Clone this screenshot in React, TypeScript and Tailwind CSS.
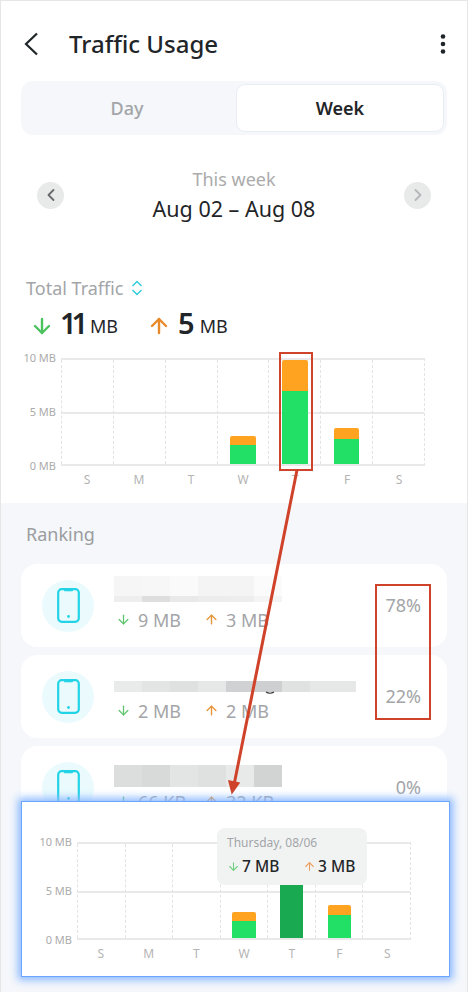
import { ArrowDown, ArrowUp, ChevronLeft, ChevronRight } from "lucide-react";

const font = { fontFamily: "'Noto Sans', Lato, sans-serif" };

const days = [
  { label: "S", down: 0, up: 0 },
  { label: "M", down: 0, up: 0 },
  { label: "T", down: 0, up: 0 },
  { label: "W", down: 1.8, up: 0.9 },
  { label: "T", down: 7, up: 3 },
  { label: "F", down: 2.4, up: 1.1 },
  { label: "S", down: 0, up: 0 },
];

function Chart({ height, pxPerMb, yWidth, active }: { height: number; pxPerMb: number; yWidth: number; active?: number }) {
  return (
    <div className="flex flex-col">
      <div className="flex">
        <div className="flex flex-col justify-between items-end pr-[5px] text-[11px] text-[#ababab]" style={{ width: yWidth, height }}>
          <div className="h-0 flex items-center">10 MB</div>
          <div className="h-0 flex items-center">5 MB</div>
          <div className="h-0 flex items-center">0 MB</div>
        </div>
        <div className="relative flex-1 flex border-y-2 border-[#e9e9e9] border-r border-r-[#e3e3e3] border-dashed border-l-0" style={{ height, borderTopStyle: "solid", borderBottomStyle: "solid" }}>
          <div className="absolute left-0 right-0 top-1/2 border-t-2 border-[#e9e9e9]" />
          {days.map((d, i) => (
            <div key={i} className="relative flex-1 flex flex-col justify-end items-center border-l border-dashed border-[#e3e3e3]">
              {d.down > 0 && (
                <>
                  <div className={`w-1/2 rounded-t-[2px] ${active === i ? "bg-[#d98a1a]" : "bg-[#ffa321]"}`} style={{ height: d.up * pxPerMb }} />
                  <div className={`w-1/2 ${active === i ? "bg-[#19a950]" : "bg-[#22e066]"}`} style={{ height: d.down * pxPerMb }} />
                </>
              )}
            </div>
          ))}
        </div>
      </div>
      <div className="flex mt-[5px] text-[12px] text-[#b4b4b4]" style={{ paddingLeft: yWidth }}>
        {days.map((d, i) => (
          <div key={i} className="flex-1 text-center">{d.label}</div>
        ))}
      </div>
    </div>
  );
}

function PhoneIcon() {
  return (
    <svg width="23" height="35" viewBox="0 0 23 35" fill="none" stroke="#22d3e6" strokeWidth="2.2">
      <rect x="1.2" y="1.2" width="20.6" height="32.6" rx="3.5" />
      <path d="M7.5 1.6h8v1.2h-8z" fill="#22d3e6" strokeWidth="1" />
      <circle cx="11.5" cy="28.5" r="1.4" fill="#22d3e6" stroke="none" />
    </svg>
  );
}

function Mosaic({ cols, h }: { cols: string[]; h: string }) {
  return (
    <div className={`flex ${h}`}>
      {cols.map((c, i) => (
        <div key={i} className="w-[28px]" style={{ background: c }} />
      ))}
    </div>
  );
}

function RankRow({ percent, down, up, children }: { percent: string; down: string; up: string; children: React.ReactNode }) {
  return (
    <div className="flex items-center h-[83px] bg-white rounded-[16px] pl-[21px] pr-[26px]">
      <div className="w-[52px] h-[52px] rounded-full bg-[#ebfbfd] flex items-center justify-center shrink-0">
        <PhoneIcon />
      </div>
      <div className="flex-1 ml-[20px] pb-[4px]">
        <div className="h-[26px] flex flex-col justify-end">{children}</div>
        <div className="flex items-center mt-[6px] text-[18px] text-[#a3a5a8] leading-6">
          <ArrowDown size={15} strokeWidth={2} className="text-[#5cc46a] ml-[2px] mr-[7px]" />
          <span className="w-[66px]">{down}</span>
          <ArrowUp size={15} strokeWidth={2.2} className="text-[#e6953a] mr-[7px]" />
          <span>{up}</span>
        </div>
      </div>
      <div className="text-[18px] text-[#a3a5a8]">{percent}</div>
    </div>
  );
}

export default function App() {
  return (
    <div className="relative w-[468px] h-[992px] overflow-hidden bg-white border-x border-t border-[#e6e6e6] text-[#1f2528]" style={font}>
      <div className="h-[502px]">
        <div className="flex items-center h-[80px] pt-[6px] pl-[23px] pr-[20px]">
          <svg width="15" height="24" viewBox="0 0 15 24" fill="none" stroke="#1f2528" strokeWidth="2.2">
            <path d="M13 1.5 2 12l11 10.5" />
          </svg>
          <div className="ml-[30px] flex-1 text-[24px] font-medium">Traffic Usage</div>
          <svg width="8" height="20" viewBox="0 0 8 20" fill="#1f2528">
            <circle cx="4" cy="2.5" r="2.3" />
            <circle cx="4" cy="10" r="2.3" />
            <circle cx="4" cy="17.5" r="2.3" />
          </svg>
        </div>

        <div className="mx-[20px] h-[54px] flex rounded-[12px] bg-[#f5f7fb] p-[3px] text-[18px]">
          <div className="flex-1 flex items-center justify-center pr-[6px] text-[#a3a5a8] font-medium">Day</div>
          <div className="w-[208px] flex items-center justify-center rounded-[9px] bg-white border border-[#e9edf3] font-semibold">Week</div>
        </div>

        <div className="flex items-center mt-[27px] mx-[36px] h-[66px]">
          <div className="w-[27px] h-[27px] rounded-full bg-[#e8eaea] flex items-center justify-center">
            <ChevronLeft size={20} strokeWidth={2.2} className="text-[#666a6c]" />
          </div>
          <div className="flex-1 text-center">
            <div className="text-[18px] text-[#ababab] leading-[26px]">This week</div>
            <div className="text-[21.5px] leading-[30px] mt-[2px]">Aug 02 – Aug 08</div>
          </div>
          <div className="w-[27px] h-[27px] rounded-full bg-[#e8eaea] flex items-center justify-center">
            <ChevronRight size={20} strokeWidth={2.2} className="text-[#b4b6b7]" />
          </div>
        </div>

        <div className="mt-[48px] ml-[25px] flex items-center text-[18px] text-[#a3a5a8] leading-[24px]">
          Total Traffic
          <svg className="ml-[7px]" width="12" height="16" viewBox="0 0 12 16" fill="none" stroke="#2ccbdc" strokeWidth="1.4">
            <path d="M1.5 6 6 1.5 10.5 6M1.5 10 6 14.5 10.5 10" />
          </svg>
        </div>

        <div className="flex items-end mt-[5px] ml-[29px] h-[36px]">
          <ArrowDown size={24} strokeWidth={2.4} className="text-[#4cc25f] mb-[3px]" />
          <span className="ml-[6px] w-[25px] text-[29px] font-semibold leading-[36px] tracking-[-5px]">11</span>
          <span className="ml-[5px] text-[18px] leading-[30px]">MB</span>
          <ArrowUp size={24} strokeWidth={2.4} className="ml-[29px] text-[#e8892a] mb-[3px]" />
          <span className="ml-[7px] text-[29px] font-semibold leading-[36px]">5</span>
          <span className="ml-[5px] text-[18px] leading-[30px]">MB</span>
        </div>

        <div className="mt-[17px] ml-[4px] w-[420px]">
          <Chart height={108} pxPerMb={10.4} yWidth={56} />
        </div>
      </div>

      <div className="h-[490px] bg-[#f5f7fb] px-[20px]">
        <div className="pt-[19px] pl-[5px] text-[18px] leading-[24px] text-[#9b9d9f]">Ranking</div>
        <div className="mt-[18px] flex flex-col gap-[8px]">
          <RankRow percent="78%" down="9 MB" up="3 MB">
            <Mosaic h="h-[20px]" cols={["#f6f6f6", "#f7f7f7", "#fafafa", "#f4f4f4", "#f4f4f4", "#fbfbfb"]} />
            <Mosaic h="h-[6px]" cols={["#eeeeee", "#dedede", "#e9e9e9", "#ececec", "#ededed", "#f4f4f4"]} />
          </RankRow>
          <RankRow percent="22%" down="2 MB" up="2 MB">
            <div className="flex h-[11px] mb-[1px]">
              {["#e9eaea", "#e3e4e4", "#dfe0e0", "#e6e7e7", "#cfd1d2", "#cdcfd0", "#e0e1e1", "#e6e7e7"].map((c, i) => (
                <div key={i} className={i === 7 ? "w-[46px]" : "w-[28px]"} style={{ background: c }} />
              ))}
            </div>
          </RankRow>
          <RankRow percent="0%" down="66 KB" up="32 KB">
            <div className="mb-[-3px]">
              <Mosaic h="h-[22px]" cols={["#dcdddd", "#d8d9d9", "#e3e4e4", "#dfe0e0", "#e8e9e9", "#d2d3d3"]} />
            </div>
          </RankRow>
        </div>
      </div>

      {/* annotations drawn over the screenshot */}
      <div className="absolute left-[278px] top-[351px] w-[34px] h-[119px] border-2 border-[#d0432b]" />
      <div className="absolute left-[374px] top-[583px] w-[56px] h-[136px] border-2 border-[#d0432b]" />
      <svg className="absolute left-0 top-0" width="468" height="992" fill="none">
        <path d="M265 691q4 2.5 8 0" stroke="#333" strokeWidth="1.2" />
        <path d="M296 469 233 784" stroke="#d0432b" strokeWidth="3" />
        <path d="M228 780 231 792 238 782Z" fill="#d0432b" stroke="#d0432b" strokeWidth="1.5" />
      </svg>

      {/* zoomed chart panel */}
      <div className="absolute left-[20px] top-[800px] w-[429px] h-[176px] bg-white border border-[#6aa5ff] shadow-[0_0_8px_3px_#8ab8ff] pt-[40px] pl-[3px] pr-[38px]">
        <Chart height={98} pxPerMb={9.5} yWidth={52} active={4} />
        <div className="absolute left-[195px] top-[26px] w-[150px] h-[57px] rounded-[8px] bg-[#f1f3f3] pl-[10px] pt-[6px] whitespace-nowrap">
          <div className="text-[12px] leading-[18px] text-[#a3a5a8]">Thursday, 08/06</div>
          <div className="flex items-center mt-[2px] text-[15.5px] leading-[24px] font-medium">
            <ArrowDown size={13} strokeWidth={2} className="text-[#6fcf7f]" />
            <span className="ml-[2px] w-[61px]">7 MB</span>
            <ArrowUp size={13} strokeWidth={2} className="text-[#ee9d5a]" />
            <span className="ml-[2px]">3 MB</span>
          </div>
        </div>
      </div>
    </div>
  );
}
